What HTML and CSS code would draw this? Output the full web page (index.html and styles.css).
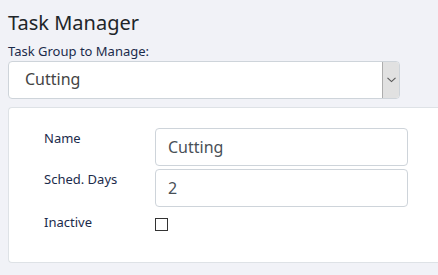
FILE: index.html
```html
<!DOCTYPE html>
<html lang="en">
<head>
  <meta charset="UTF-8" />
  <meta name="viewport" content="width=device-width, initial-scale=1.0"/>
  <title>Task Manager</title>
  <link rel="stylesheet" href="styles.css">
</head>
<body>
  <h1 class="page-title">Task Manager</h1>

  <label class="group-label" for="groupSelect">Task Group to Manage:</label>
  <div class="group-select" id="groupSelect">
    <span class="group-value">Cutting</span>
    <span class="group-arrow">
      <svg width="9" height="6" viewBox="0 0 9 6"><path d="M0.5 0.8 L4.5 4.6 L8.5 0.8" fill="none" stroke="#555" stroke-width="1.1"/></svg>
    </span>
  </div>

  <div class="task-card">
    <div class="task-form">
      <div class="field-label">Name</div>
      <input type="text" class="field-input" value="Cutting"/>

      <div class="field-label">Sched. Days</div>
      <input type="text" class="field-input" value="2"/>

      <div class="field-label label-check">Inactive</div>
      <div><span class="field-check"></span></div>
    </div>
  </div>
</body>
</html>
```

FILE: styles.css
```css
body {
  margin: 0;
  padding: 8px 0 8px 8px;
  background-color: #f1f2f7;
  font-family: "Noto Sans", "Open Sans", sans-serif;
  color: #212529;
  overflow: hidden;
}

.page-title {
  margin: 0;
  font-size: 20px;
  font-weight: 400;
  line-height: 28px;
  margin-top: 1px;
}

.group-label {
  display: block;
  margin-top: 5px;
  font-size: 13px;
  line-height: 18px;
  color: #1b2b4b;
}

.group-select {
  display: flex;
  width: 392px;
  height: 38px;
  box-sizing: border-box;
  margin-top: 1px;
  background-color: #fff;
  border: 1px solid #ced4da;
  border-radius: 4px;
}

.group-value {
  flex: 1;
  padding-left: 16px;
  font-size: 16px;
  line-height: 35px;
  color: #444;
}

.group-arrow {
  width: 17px;
  display: flex;
  align-items: center;
  justify-content: center;
  background-color: #e1e1e1;
  border-left: 1px solid #adadad;
  border-radius: 0 3px 3px 0;
  box-sizing: border-box;
}

/* card runs on past the right edge of the window */
.task-card {
  margin-top: 8px;
  background-color: #fff;
  border: 1px solid #dee2e6;
  border-right: none;
  border-radius: 4px 0 0 4px;
  padding: 20px 0 31px 35px;
}

.task-form {
  display: grid;
  grid-template-columns: 111px 253px;
  row-gap: 3px;
}

.field-label {
  font-size: 13px;
  line-height: 18px;
  padding-top: 1px;
  color: #1b2b4b;
}

.label-check {
  padding-top: 3px;
}

.field-input {
  width: 253px;
  height: 38px;
  box-sizing: border-box;
  margin: 0;
  padding: 0 12px;
  border: 1px solid #ced4da;
  border-radius: 4px;
  font-family: inherit;
  font-size: 16px;
  color: #495057;
  background-color: #fff;
}

.field-check {
  display: block;
  width: 13px;
  height: 13px;
  box-sizing: border-box;
  margin-top: 8px;
  border: 1px solid #333;
  background-color: #fff;
}
```
